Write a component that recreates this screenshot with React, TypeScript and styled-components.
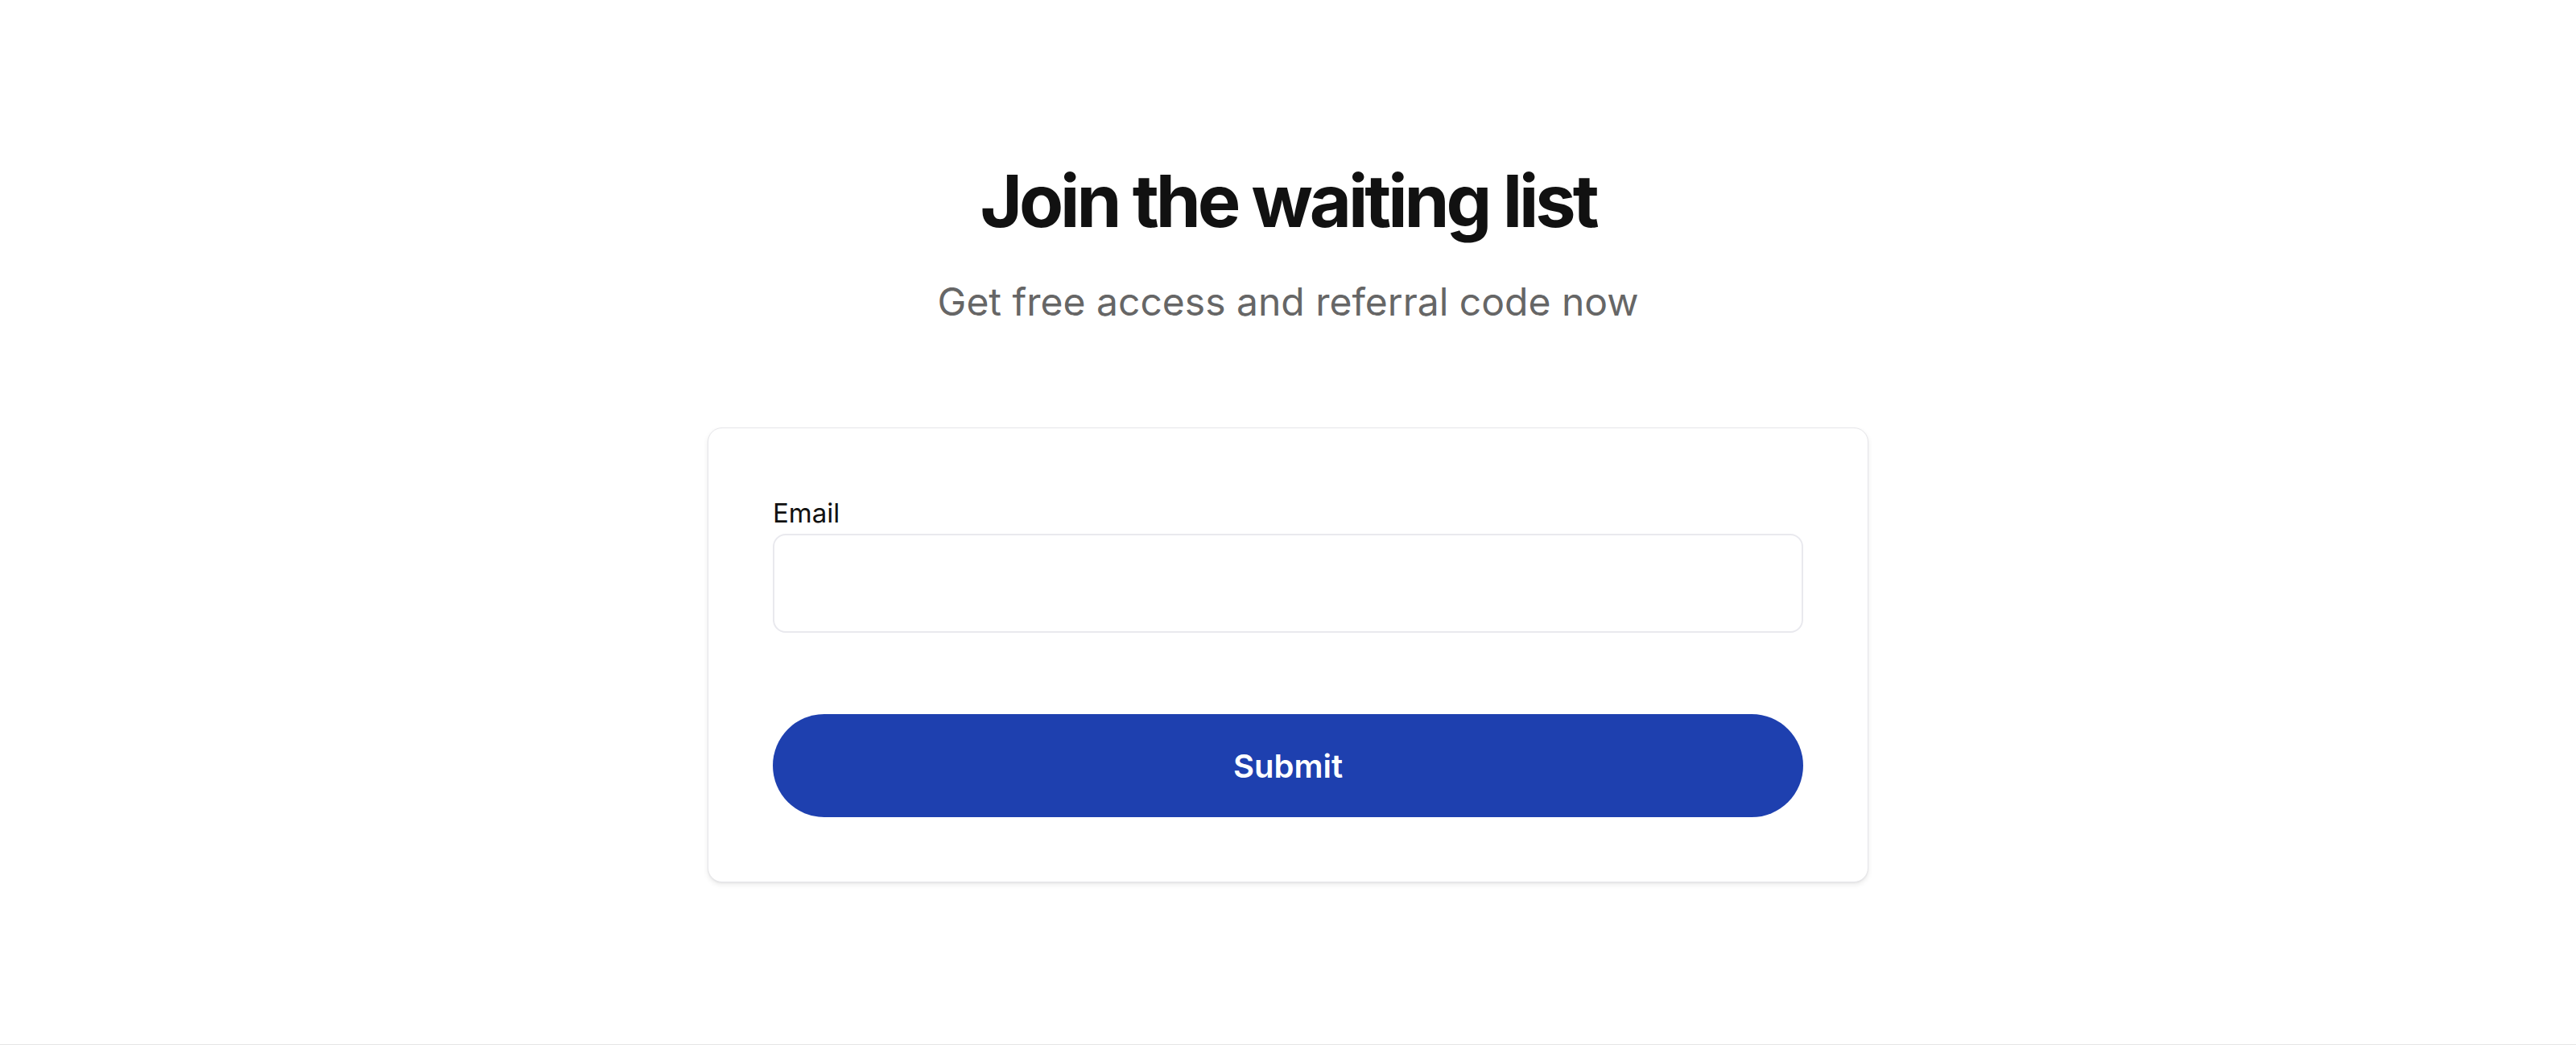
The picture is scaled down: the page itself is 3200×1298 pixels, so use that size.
import styled, { createGlobalStyle } from "styled-components";

const GlobalStyle = createGlobalStyle`
  html, body {
    margin: 0;
    padding: 0;
    background: #ffffff;
    font-family: Inter, "Noto Sans", sans-serif;
  }
  * {
    box-sizing: border-box;
  }
`;

const Page = styled.div`
  display: flex;
  flex-direction: column;
  min-height: 100vh;
`;

const Main = styled.main`
  flex: 1;
  display: flex;
  flex-direction: column;
  align-items: center;
  padding-top: 205px;
`;

const Title = styled.h1`
  margin: 0;
  font-size: 90px;
  line-height: 1;
  font-weight: 700;
  letter-spacing: -0.045em;
  color: #111111;
`;

const Subtitle = styled.p`
  margin: 56px 0 0;
  font-size: 48px;
  line-height: 1;
  font-weight: 400;
  color: #666666;
`;

const Card = styled.form`
  margin-top: 132px;
  width: 1442px;
  padding: 80px;
  display: flex;
  flex-direction: column;
  background: #ffffff;
  border: 1px solid #e6e6ea;
  border-radius: 18px;
  box-shadow: 0 3px 6px rgba(0, 0, 0, 0.08), 0 1px 2px rgba(0, 0, 0, 0.05);
`;

const Label = styled.label`
  font-size: 33px;
  line-height: 51px;
  color: #111111;
`;

const Input = styled.input`
  height: 123px;
  width: 100%;
  padding: 0 30px;
  border: 2px solid #e9e9ee;
  border-radius: 16px;
  font-family: inherit;
  font-size: 32px;
  outline: none;
  background: #ffffff;
`;

const SubmitButton = styled.button`
  margin-top: 101px;
  height: 128px;
  width: 100%;
  border: none;
  border-radius: 64px;
  background: #1e40af;
  color: #ffffff;
  font-family: inherit;
  font-size: 40px;
  font-weight: 600;
  cursor: pointer;
`;

const Footer = styled.footer`
  border-top: 1px solid #e5e5e5;
  height: 1px;
`;

export default function App() {
  return (
    <>
      <GlobalStyle />
      <Page>
        <Main>
          <Title>Join the waiting list</Title>
          <Subtitle>Get free access and referral code now</Subtitle>
          <Card onSubmit={(e) => e.preventDefault()}>
            <Label htmlFor="email">Email</Label>
            <Input id="email" type="email" />
            <SubmitButton type="submit">Submit</SubmitButton>
          </Card>
        </Main>
        <Footer />
      </Page>
    </>
  );
}
